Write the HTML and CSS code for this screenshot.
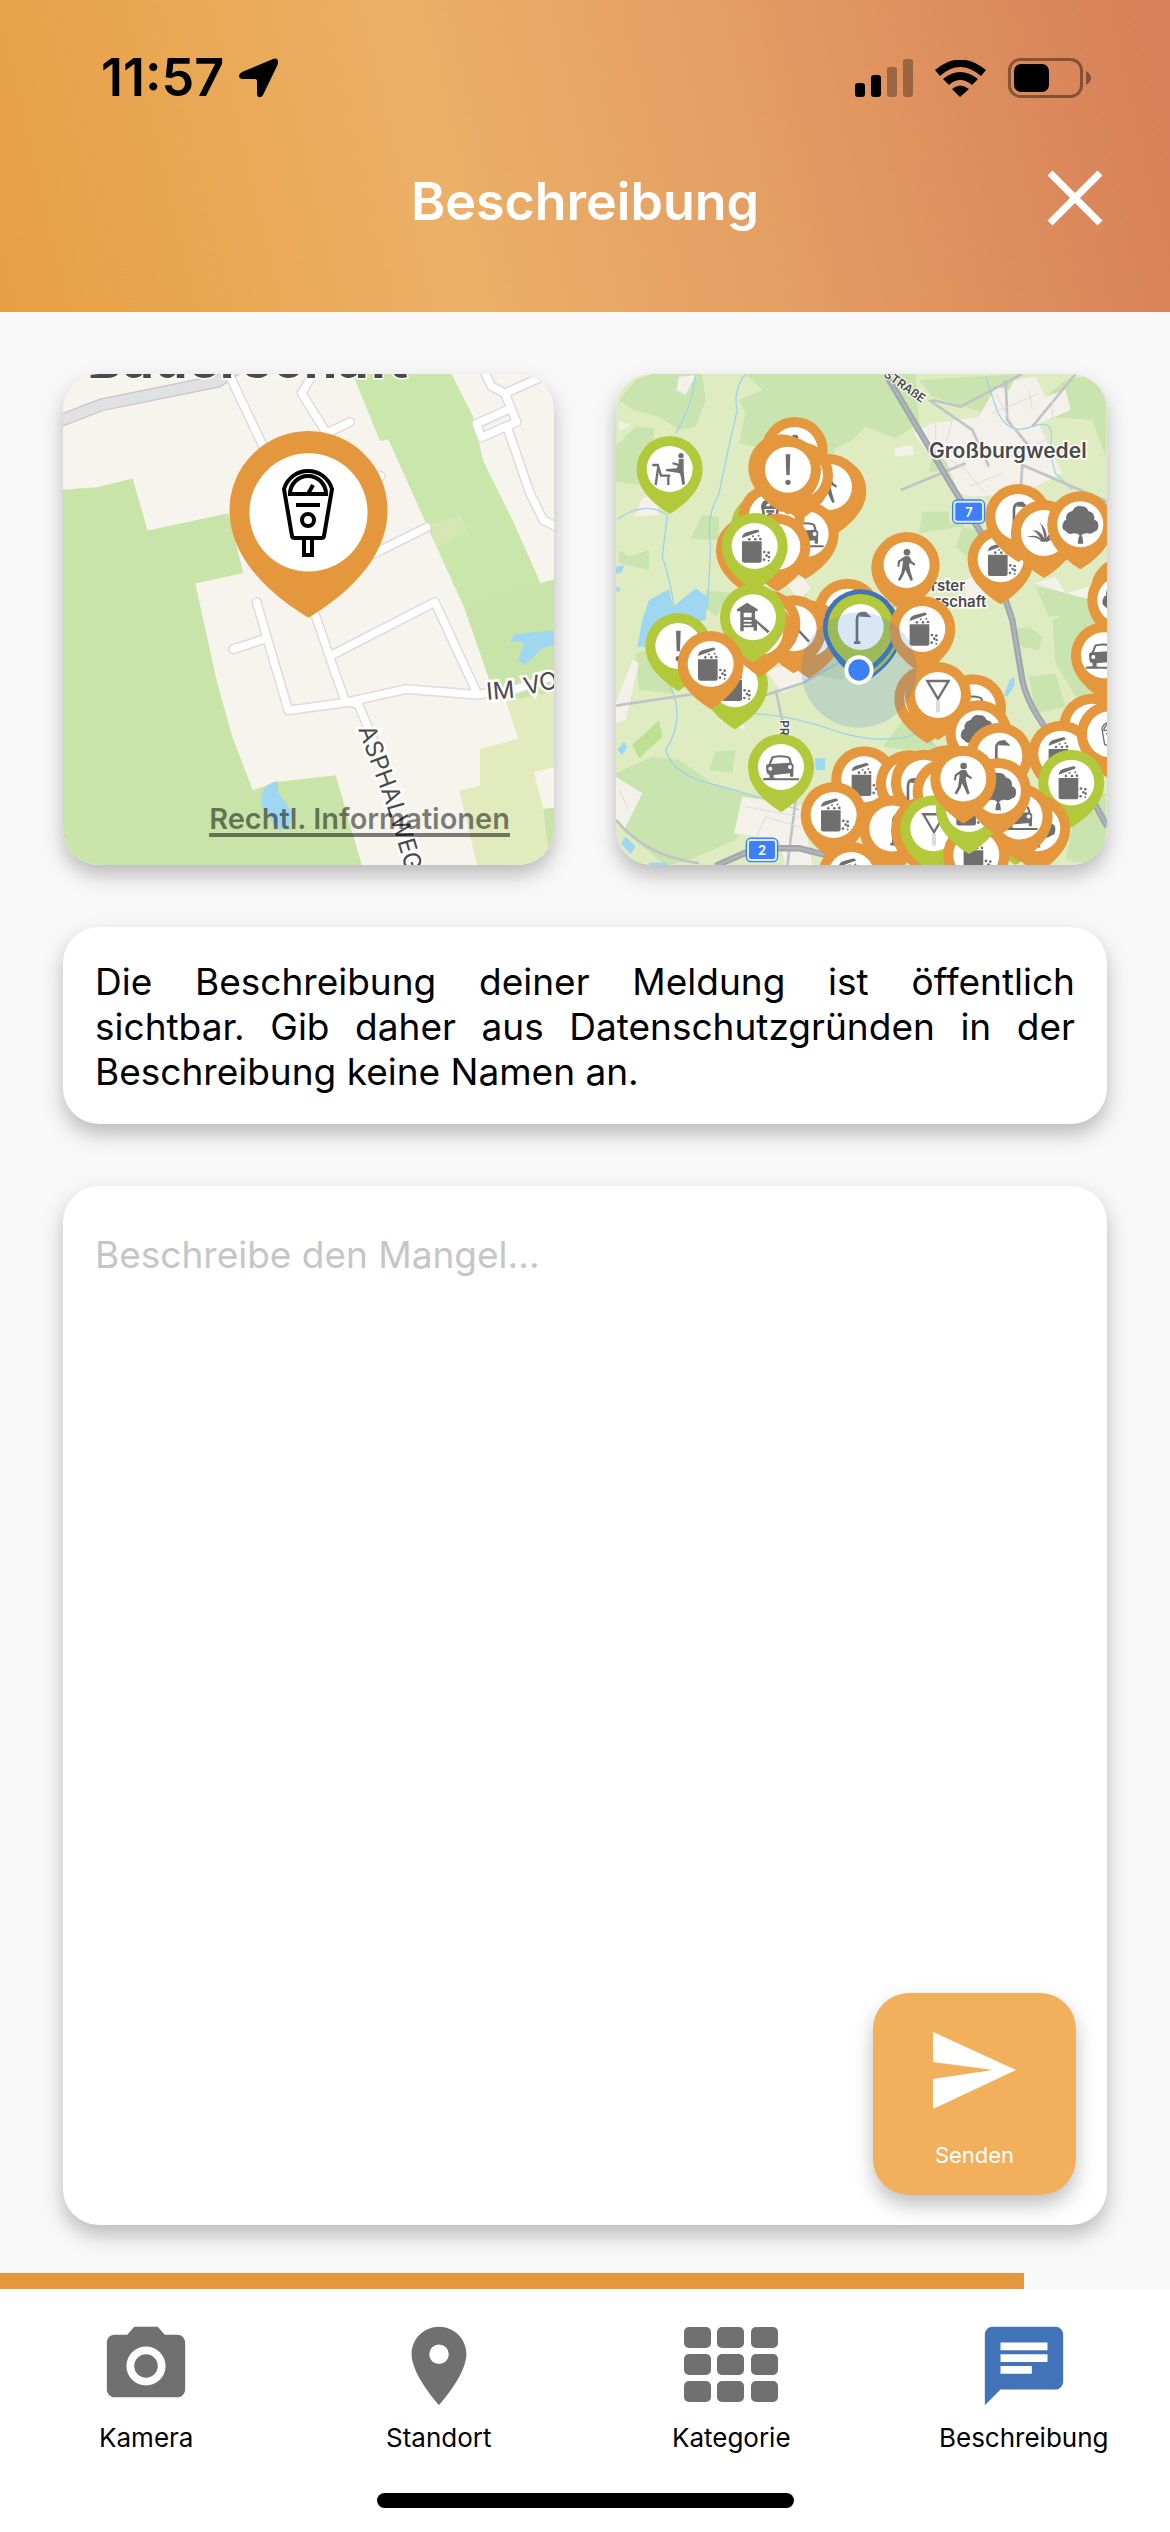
FILE: index.html
```html
<!DOCTYPE html>
<html lang="de">
<head>
<meta charset="utf-8">
<meta name="viewport" content="width=device-width, initial-scale=1">
<title>Beschreibung</title>
<link rel="stylesheet" href="styles.css">
</head>
<body>
<svg class="defs" aria-hidden="true">
  <defs>
    <g id="pin">
      <path d="M0 135C-38 112 -99 66 -99 0A99 99 0 0 1 99 0C99 66 38 112 0 135Z"/>
      <circle r="69" fill="#fff"/>
    </g>
    <g id="bin">
      <path d="M-38 -14H21V44Q21 50 15 50H-31Q-38 50 -38 43Z"/>
      <path d="M-38 -24C-37 -33 -33 -38 -25 -41L5 -49Q12 -50 14 -43L-38 -24Z"/>
      <g><circle cx="-16" cy="-20" r="4"/><circle cx="-5" cy="-29" r="3"/><circle cx="2" cy="-20" r="4"/><circle cx="12" cy="-31" r="3"/><circle cx="17" cy="-21" r="4"/><circle cx="29" cy="18" r="4"/><circle cx="42" cy="20" r="4"/><circle cx="36" cy="29" r="4"/><circle cx="28" cy="41" r="4"/><circle cx="43" cy="33" r="4"/><circle cx="42" cy="44" r="3"/></g>
    </g>
    <g id="man">
      <circle cx="1" cy="-38" r="10"/>
      <path d="M-6 -26H8L15 -12L26 -4L24 2L10 -6L7 0L11 18L19 45L12 48L1 24L-4 14L-8 28L-20 48L-26 44L-16 24L-12 -2L-11 -14L-20 -8L-22 6L-28 4L-26 -12Z"/>
    </g>
    <g id="car">
      <path d="M-45 -4Q-42 -8 -37 -9L-29 -29Q-27 -33 -22 -33Q0 -38 22 -32Q27 -31 29 -26L33 -11Q38 -9 38 -3L37 16V27Q33 33 27 27V19L-22 24V31Q-28 37 -34 31L-35 23Q-44 22 -44 10ZM-30 -9L26 -13L22 -26Q0 -32 -23 -27Z" fill-rule="evenodd"/>
      <circle cx="-32" cy="5" r="6" fill="#fff"/><circle cx="27" cy="0" r="6" fill="#fff"/>
      <path d="M-54 34Q-20 30 -16 34H54V40H-54Z"/>
    </g>
    <g id="lamp"><path d="M-13 44V-22Q-13 -43 8 -42H16M-22 47H-3M2 -35Q10 -44 20 -34Z" fill="none" stroke="#6f6f6f" stroke-width="8"/></g>
    <g id="tree">
      <path d="M-8 58L-4 34L-18 26Q-36 34 -44 20Q-58 14 -52 -2Q-50 -12 -42 -14Q-46 -34 -24 -40Q-14 -58 2 -54Q18 -56 24 -40Q44 -36 42 -14Q56 -10 54 6Q54 20 42 22Q32 32 18 26L6 34L9 58Z"/>
      <path d="M-12 28L-3 36M12 28L4 36" stroke="#fff" stroke-width="4"/>
    </g>
    <g id="bang"><path d="M-7 -46H7L5 16H-5Z"/><circle cy="38" r="8"/></g>
    <g id="yield"><path d="M-32 -42H32L0 12Z" fill="none" stroke="#6f6f6f" stroke-width="7"/><path d="M-6 16H6V52H-6Z" fill="#dcdcdc"/></g>
    <g id="grass"><path d="M-52 12Q-20 2 -8 20Q-26 -10 -40 -8Q-10 -12 2 18Q-4 -20 -14 -34Q10 -10 8 14Q20 -8 40 -10Q20 0 16 18Q30 10 44 14Q22 18 10 26H-8Q-16 10 -52 12Z"/></g>
    <g id="tower"><path d="M-48 -24L-18 -44L14 -24V-18H6V4L50 42L44 48L12 18V40H2V30H-28V42H-38V-18H-48ZM-28 -14V0H-4V-14ZM-28 8V13H-4V8ZM-28 19V24H-4V19Z" fill-rule="evenodd"/></g>
    <g id="bench">
      <circle cx="34" cy="-40" r="8"/>
      <path d="M27 -30H42V6L46 46L38 48L32 16L28 12L-12 6L-10 0L22 -2L24 -10L8 -14L9 -20L27 -16Z"/>
      <path d="M-52 -12H-36L-26 20H2M-34 -8L-42 48M-4 20V48" fill="none" stroke="#6f6f6f" stroke-width="7"/>
    </g>
    <g id="meter">
      <path d="M-16 35L-24 -12A25 25 0 0 1 24 -12L16 35Q16 37 13 37H-13Q-16 37 -16 35ZM-18 -7H18A18 18 0 0 0 -18 -7ZM0 -7L5 -16M-12 4H12M-4 37V54H4V37" fill="none" stroke="currentColor"/>
      <circle cy="19" r="6" fill="none" stroke="currentColor"/>
    </g>
  </defs>
</svg>

<header class="header">
  <div class="status">
    <div class="status-left">
      <span class="time">11:57</span>
      <svg width="39" height="40" viewBox="0 0 39 40" aria-hidden="true"><path d="M34 1Q39 -1 39 4Q39 6 38 8L24 37Q22 40 20 39Q18 39 18 35V23Q18 21 16 21H4Q0 21 0 18Q0 16 3 14Z"/></svg>
    </div>
    <div class="status-right">
      <svg width="58" height="38" viewBox="0 0 58 38" aria-hidden="true"><rect y="24" width="10" height="14" rx="3"/><rect x="16" y="16" width="10" height="22" rx="3"/><g opacity=".3"><rect x="32" y="8" width="10" height="30" rx="3"/><rect x="48" width="10" height="38" rx="3"/></g></svg>
      <svg width="51" height="37" viewBox="0 0 51 37" aria-hidden="true"><path d="M25 37L17 29Q25 22 34 29ZM8 19Q25 5 43 19L37 25Q25 15 14 25ZM0 10Q25 -11 51 10L46 16Q25 -2 5 16Z"/></svg>
      <svg width="83" height="40" viewBox="0 0 83 40" aria-hidden="true"><rect x="1.500" y="1.500" width="72" height="37" rx="11" fill="none" stroke="#000" stroke-width="3" opacity=".4"/><rect x="6" y="6" width="35" height="28" rx="7"/><path d="M78 13Q83 16 83 20T78 27Z" opacity=".4"/></svg>
    </div>
  </div>
  <div class="titlebar">
    <h1 class="title">Beschreibung</h1>
    <button class="close" type="button" aria-label="Schließen"><svg width="56" height="56" viewBox="0 0 56 56"><path d="M3 3L53 53M53 3L3 53" stroke="#fff" stroke-width="7"/></svg></button>
  </div>
</header>

<main class="main">
  <div class="maps">
    <div class="map">
      <svg viewBox="0 0 491 491" aria-hidden="true">
        <rect width="491" height="491" fill="#f7f4ed"/>
        <g transform="matrix(.3333 0 0 .338 -13 -14.5)">
          <path d="M39 385L140 378L248 352L293 506L535 455L580 632L436 663L500 950L545 1110L608 1274L680 1250L857 1230L940 1510H39Z" fill="#c9e4a9"/>
          <path d="M908 43H1205L1270 170L1300 300L1390 480L1472 662L1520 650V930L1320 950L1245 740L1160 555L1015 236L990 242Z" fill="#cae7ab"/>
          <path d="M1245 740Q1330 690 1472 662L1520 650V1000L1340 1010Z" fill="#c9e4a9"/>
          <path d="M1142 490L1232 462L1250 510L1160 555Z" fill="#d6e7b6"/>
          <path d="M1368 1012L1520 980V1510H1285L1228 1276L1290 1260V1152L1405 1122Z" fill="#e2ebbe"/>
          <path d="M1452 1220L1520 1205V1325L1480 1330Z" fill="#f7f4ed"/><path d="M1480 1330L1520 1325V1450H1495Z" fill="#c9e4a9"/>
          <path d="M1378 832L1395 812L1520 800V842L1475 855L1425 905L1405 890L1422 838Z" fill="#9fd7f1"/>
          <path d="M635 1320V1285Q650 1250 684 1248V1280L728 1340L715 1390H680Z" fill="#9fd7f1"/>
          <path d="M20 185L155 134L505 64L570 20" fill="none" stroke="#c4c6c8" stroke-width="38"/>
          <path d="M20 185L155 134L505 64L570 20" fill="none" stroke="#dfe1e3" stroke-width="31"/>
          <path class="road-edge" d="M540 50L660 300L790 740L885 1010L925 1020L985 1160M785 50L755 100L830 218L900 185M960 580L1130 497M985 345H992M620 718L715 1038L885 1015L1068 975L1280 992L1400 975L1530 930M550 857L650 825M845 875L1155 718L1280 985M1305 40L1325 80L1365 100L1490 45M1365 100L1400 185L1295 230L1280 190L1370 150M1375 210L1440 395L1480 475L1530 500"/>
          <path class="road-fill" d="M540 50L660 300L790 740L885 1010L925 1020L985 1160M785 50L755 100L830 218L900 185M960 580L1130 497M985 345H992M620 718L715 1038L885 1015L1068 975L1280 992L1400 975L1530 930M550 857L650 825M845 875L1155 718L1280 985M1305 40L1325 80L1365 100L1490 45M1365 100L1400 185L1295 230L1280 190L1370 150M1375 210L1440 395L1480 475L1530 500"/>
        </g>
        <g class="map-label">
          <text x="24" y="4" class="place-big">Bauerschaft</text>
          <text x="424" y="326" transform="rotate(-5 424 326)" class="street">IM</text>
          <text x="463" y="321" transform="rotate(-13 463 321)" class="street">VO</text>
          <path id="street-line" d="M295 355L323 430L344 500" fill="none" stroke="none"/>
          <text class="street"><textPath href="#street-line">ASPHALWEG</textPath></text>
        </g>
        <g transform="translate(245.500 136) scale(.798)" fill="#e4973c"><path d="M0 135C-38 112 -99 66 -99 0A99 99 0 0 1 99 0C99 66 38 112 0 135Z"/><circle cy="3" r="74" fill="#fff"/></g>
        <use href="#meter" x="245" y="127" stroke-width="4"/>
      </svg>
      <a class="legal" href="#">Rechtl. Informationen</a>
    </div>
    <div class="map">
      <svg viewBox="0 0 491 491" role="img" aria-label="Karte der Meldungen">
        <rect width="491" height="491" fill="#dfebc0"/>
        <g transform="translate(-17 -14) scale(.3333)">
          <g fill="#c9e4ae">
            <path d="M50 260L110 200L165 205L155 350L120 375L50 365ZM160 42H310L320 120L290 200L240 210L180 170L100 150L60 120L110 60ZM440 42H950L960 190L890 235L800 200L760 240L640 300L520 270L420 250L440 160L420 120L490 90Z"/>
            <path d="M60 570L90 590L150 570V630L60 610ZM310 465L360 470V540L275 535ZM560 200H720L700 300L600 290ZM970 455H1050V490H1095L1070 560L1140 620H1220L1190 520L1080 500L960 520Z"/>
            <path d="M1340 170L1480 180L1521 290V42L1400 60L1340 110ZM960 60L1260 42L1230 120L1160 160L1000 110ZM1000 290L1050 280L1060 330L990 335Z"/>
            <path d="M51 1240L160 1190L240 1200L340 1270L480 1310L410 1440L270 1500L200 1518L60 1400ZM350 1175L410 1170L400 1240L330 1230ZM320 690L400 700L350 770L320 740ZM110 880L210 850L220 1000L120 990Z"/>
            <path d="M1240 810L1290 800L1330 830L1320 870L1270 860ZM1360 780L1521 700V1020L1430 1010L1370 910ZM1290 950L1370 940L1400 1040L1310 1060ZM1310 680L1521 720L1480 760L1350 770ZM1440 1300H1521V1518L1400 1500ZM480 1390L560 1400L570 1460L490 1440ZM930 1060L1010 1100L1000 1180L850 1160ZM700 780L770 900L730 960L620 940Z"/>
          </g>
          <path d="M100 1155L180 1080L190 1130L120 1195Z" fill="#bfdf93"/>
          <g fill="#f3f1ea">
            <path d="M945 220L1000 190L1140 170L1190 80L1230 90L1245 60L1310 50L1340 110L1400 90L1415 150L1320 190L1350 260L1390 340L1270 400L1120 410L1080 400L1040 300L980 270ZM885 265L940 255L945 285L890 290Z"/>
            <path d="M240 50L290 45L260 105L232 90ZM60 185L95 195L60 215ZM130 415L170 400L180 465L105 470ZM560 670L610 650L635 685L600 720ZM50 1030L100 900L120 910L80 1080L50 1090ZM51 1250L130 1300L75 1410L51 1390ZM430 1310L610 1340L640 1518H560L540 1440L405 1420ZM360 1080L430 1075L440 1110ZM500 930L610 910L640 960L550 1000ZM1310 670L1370 650L1400 700L1470 680L1480 720L1400 700ZM1100 660L1140 640L1160 700L1100 720Z"/>
          </g>
          <g fill="#9dd7f2">
            <path d="M130 780L150 720L210 688L222 740L290 685L325 710L320 780L200 800L190 860L115 860ZM51 620L75 615L70 635L51 642ZM55 1170L75 1145L85 1160L70 1185ZM648 1195H678V1230H650ZM65 1450L80 1430L110 1460L95 1482ZM1232 960L1245 950L1248 975L1225 1010L1215 1005ZM150 1508H205V1520H150ZM50 680L65 685L55 700Z"/>
          </g>
          <path d="M290 42Q280 140 230 220M440 42Q400 90 415 150Q380 300 360 400Q320 470 335 560L325 750M55 478Q140 420 205 465L190 590Q220 680 225 750M215 980Q260 1080 200 1170Q220 1240 330 1270Q450 1300 600 1350M430 1060Q560 1060 700 1110T960 1120L1010 1160M1160 50L1190 140Q1220 230 1300 200T1350 270L1370 340L1420 390" fill="none" stroke="#9dd3ec" stroke-width="4"/>
          <g fill="none" stroke="#c0c4c6" stroke-width="8">
            <path d="M1270 42L1085 140L1000 120M990 120L1120 210L1170 320M1430 42L1300 200M1220 60L1225 180L1300 270M1260 470L1270 315L1525 425M905 390L1100 310M51 1037L300 1000M500 1005L610 970L750 890M530 990L550 1080M590 1320L565 1518M51 1380Q140 1490 300 1510M870 780L900 690"/>
          </g>
          <g fill="none" stroke="#dcdcd9" stroke-width="3"><path d="M1010 190V270L1100 330L1160 400M1060 180L1040 250M1190 100L1260 230M1320 100L1180 160M1360 120V180M1290 90L1300 150M1100 250L1210 300L1360 230M1110 380L1210 340M60 1290L90 1350M440 1340L600 1370M470 1440L500 1370L600 1400"/></g>
          <path d="M860 42L1060 380L1160 540L1240 780L1270 960Q1290 1060 1410 1190L1525 1400M350 1518L470 1465H600L700 1490" fill="none" stroke="#9ea5ac" stroke-width="19"/>
          <path d="M860 42L1060 380L1160 540L1240 780L1270 960Q1290 1060 1410 1190L1525 1400M350 1518L470 1465H600L700 1490" fill="none" stroke="#b0b5ba" stroke-width="7"/>
          <g fill="none" stroke="#3d7ff5" stroke-width="14"><rect x="1066" y="425" width="86" height="60" rx="9"/><rect x="447" y="1440" width="84" height="60" rx="9"/></g>
          <g fill="#3d7ff5" stroke="#d9ecff" stroke-width="6"><rect x="1066" y="425" width="86" height="60" rx="9"/><rect x="447" y="1440" width="84" height="60" rx="9"/></g>
        </g>
        <g class="map-label">
          <text x="313" y="84" class="place">Großburgwedel</text>
          <text x="315" y="217" class="place-small">rster</text>
          <text x="319" y="233" class="place-small">rschaft</text>
          <text x="267" y="2" transform="rotate(35 267 2)" class="street-small">STRAßE</text>
          <text x="164" y="346" transform="rotate(90 164 346)" class="street-small">PR</text>
          <text x="353" y="143" class="shield">7</text>
          <text x="146" y="481" class="shield">2</text>
        </g>
        <g transform="translate(-17 -14) scale(.3333)" fill="#e4973c">
          <g class="icon-ink">
            <g class="green"><use href="#pin" x="495" y="500"/></g>
            <g class="orange"><use href="#pin" x="587" y="270"/><use href="#pin" x="703" y="392"/><use href="#pin" x="690" y="381"/></g>
            <use href="#man" x="587" y="272"/><use href="#man" x="688" y="381"/>
            <use href="#pin" x="620" y="522" class="orange"/><use href="#car" x="620" y="522"/>
            <use href="#pin" x="518" y="470" class="orange"/><use href="#meter" x="514" y="450" stroke-width="8"/>
            <g class="orange"><use href="#pin" x="535" y="560"/><use href="#pin" x="450" y="570"/><use href="#pin" x="547" y="322"/><use href="#pin" x="603" y="345"/><use href="#pin" x="567" y="329"/></g>
            <use href="#bang" x="567" y="329"/>
            <use href="#pin" x="212" y="327" class="green"/><use href="#bench" x="212" y="327"/>
            <use href="#pin" x="467" y="558" class="green"/><use href="#bin" x="467" y="558"/>
            <use href="#pin" x="745" y="755" class="orange"/>
            <use href="#pin" x="238" y="858" class="green"/><use href="#bang" x="238" y="858"/>
            <use href="#pin" x="408" y="973" class="green"/><use href="#bin" x="408" y="973"/>
            <g class="orange"><use href="#pin" x="630" y="820"/><use href="#pin" x="584" y="805"/></g>
            <path d="M560 770L630 845M585 800V850" stroke="#6f6f6f" stroke-width="7"/>
            <g class="orange"><use href="#pin" x="505" y="790"/><use href="#pin" x="483" y="815"/></g>
            <use href="#pin" x="462" y="772" class="green"/><use href="#tower" x="462" y="772"/>
            <use href="#pin" x="335" y="912" class="orange"/><use href="#bin" x="335" y="912"/>
            <use href="#pin" class="blue" transform="translate(795 815) scale(1.14)"/>
            <use href="#pin" class="green" transform="translate(793 812) scale(1.09)"/>
            <use href="#pin" class="blue" transform="translate(785 801) scale(1.14)"/>
            <use href="#pin" x="785" y="801" class="green"/><use href="#lamp" x="787" y="801"/>
            <use href="#pin" x="546" y="1221" class="green"/><use href="#car" x="546" y="1221"/>
            <g class="orange"><use href="#pin" x="916" y="622"/><use href="#pin" x="923" y="615"/></g><use href="#man" x="923" y="615"/>
            <use href="#pin" x="970" y="807" class="orange"/><use href="#bin" x="970" y="807"/>
            <use href="#pin" x="985" y="1015" class="orange"/>
            <use href="#pin" x="1122" y="1042" class="orange"/><use href="#car" x="1122" y="1042"/>
            <use href="#pin" x="1017" y="1005" class="orange"/><use href="#yield" x="1017" y="1005"/>
            <use href="#pin" x="1205" y="598" class="orange"/><use href="#bin" x="1205" y="598"/>
            <use href="#pin" x="1258" y="471" class="orange"/><use href="#lamp" x="1258" y="471"/>
            <use href="#pin" x="1335" y="519" class="orange"/><use href="#grass" x="1335" y="519"/>
            <use href="#pin" x="1444" y="493" class="orange"/><use href="#tree" x="1444" y="493"/>
            <g class="orange"><use href="#pin" x="1575" y="690"/><use href="#pin" x="1564" y="720"/></g><use href="#tree" x="1564" y="720"/>
            <use href="#pin" x="1515" y="886" class="orange"/><use href="#car" x="1515" y="886"/>
            <use href="#pin" x="1480" y="1100" class="orange"/>
            <use href="#pin" x="1387" y="1181" class="orange"/><use href="#bin" x="1387" y="1181"/>
            <use href="#pin" x="1533" y="1123" class="orange"/><use href="#meter" x="1533" y="1118" stroke-width="4"/>
            <use href="#pin" x="1417" y="1268" class="green"/><use href="#bin" x="1417" y="1268"/>
            <use href="#pin" x="1139" y="1120" class="orange"/><use href="#tree" x="1139" y="1120"/>
            <use href="#pin" x="1201" y="1187" class="orange"/><use href="#lamp" x="1205" y="1187"/>
            <use href="#pin" x="796" y="1258" class="orange"/><use href="#bin" x="796" y="1258"/>
            <g class="orange"><use href="#pin" x="1043" y="1255"/><use href="#pin" x="930" y="1270"/><use href="#pin" x="975" y="1268"/></g><use href="#lamp" x="940" y="1300"/>
            <use href="#pin" x="704" y="1365" class="orange"/><use href="#bin" x="704" y="1365"/>
            <use href="#pin" x="880" y="1406" class="orange"/><use href="#lamp" x="896" y="1406"/>
            <g class="orange"><use href="#pin" x="1040" y="1295"/><use href="#pin" x="975" y="1410"/></g>
            <use href="#pin" x="757" y="1545" class="orange"/><use href="#bin" x="757" y="1545"/>
            <use href="#pin" x="1250" y="1380" class="green"/>
            <use href="#pin" x="1315" y="1405" class="orange"/><use href="#tree" x="1315" y="1405"/>
            <use href="#pin" x="1262" y="1370" class="orange"/><use href="#car" x="1262" y="1370"/>
            <use href="#pin" x="1003" y="1405" class="green"/><use href="#yield" x="1005" y="1405"/>
            <use href="#pin" x="1132" y="1485" class="orange"/><use href="#bin" x="1132" y="1485"/>
            <use href="#pin" x="1110" y="1347" class="green"/><use href="#bin" x="1110" y="1347"/>
            <use href="#pin" x="1197" y="1293" class="orange"/><use href="#tree" x="1197" y="1293"/>
            <use href="#pin" x="1093" y="1256" class="orange"/><use href="#man" x="1093" y="1256"/>
          </g>
          <circle cx="780" cy="930" r="173" fill="#4284d0" opacity=".2"/>
          <circle cx="780" cy="930" r="38" fill="#3d7ff5" stroke="#fff" stroke-width="12"/>
        </g>
      </svg>
    </div>
  </div>

  <p class="notice">Die Beschreibung deiner Meldung ist öffentlich sichtbar.&nbsp;Gib daher aus Datenschutzgründen in der Beschreibung keine Namen an.</p>

  <form class="editor">
    <textarea class="field" aria-label="Beschreibung des Mangels" placeholder="Beschreibe den Mangel..."></textarea>
    <button class="send" type="button">
      <svg width="83" height="77" viewBox="0 0 83 77" aria-hidden="true"><path d="M0 0L83 38L0 77V47L60 38L0 30Z" fill="#fff"/></svg>
      Senden
    </button>
  </form>
</main>

<div class="progress" role="progressbar" aria-label="Fortschritt" aria-valuenow="87"><div class="progress-bar"></div></div>

<footer class="footer">
  <nav class="tabs">
    <a class="tab" href="#"><svg viewBox="0 0 24 24" aria-hidden="true"><path fill-rule="evenodd" d="M9 2L7.200 4H4c-1.100 0-2 .9-2 2v12c0 1.100.9 2 2 2h16c1.100 0 2-.9 2-2V6c0-1.100-.9-2-2-2h-3.200L15 2zM12 17a5 5 0 1 1 0-10a5 5 0 0 1 0 10z"/><circle cx="12" cy="12" r="3"/></svg>Kamera</a>
    <a class="tab" href="#"><svg viewBox="0 0 24 24" aria-hidden="true"><path d="M12 2C8.130 2 5 5.130 5 9c0 5.250 7 13 7 13s7-7.750 7-13c0-3.870-3.130-7-7-7zm0 9.500a2.500 2.500 0 0 1 0-5 2.500 2.500 0 0 1 0 5z"/></svg>Standort</a>
    <a class="tab" href="#"><svg viewBox="0 0 94 94" aria-hidden="true"><g id="cells"><rect y="8" width="27" height="21" rx="5"/><rect x="33" y="8" width="27" height="21" rx="5"/><rect x="67" y="8" width="27" height="21" rx="5"/></g><use href="#cells" y="27"/><use href="#cells" y="54"/></svg>Kategorie</a>
    <a class="tab tab-active" href="#" aria-current="page"><svg viewBox="0 0 24 24" aria-hidden="true"><path fill-rule="evenodd" d="M20 2H4c-1.100 0-2 .9-2 2v18l4-4h14c1.100 0 2-.9 2-2V4c0-1.100-.9-2-2-2zM6 6h12v2H6zM6 9h12v2H6zM6 12h8v2H6z"/></svg>Beschreibung</a>
  </nav>
  <div class="home-indicator"></div>
</footer>
</body>
</html>
```
FILE: styles.css
```css
* { box-sizing: border-box; }

body {
  margin: 0;
  min-height: 100vh;
  display: flex;
  flex-direction: column;
  background: #f8f8f8;
  color: #000;
  font-family: Inter, "Liberation Sans", sans-serif;
}

button { border: 0; padding: 0; font: inherit; cursor: pointer; }
svg { display: block; }
.defs { position: absolute; width: 0; height: 0; }

.header {
  height: 312px;
  background: linear-gradient(77deg, #e79f45 0%, #e9a650 15%, #ebb068 38%, #e49c62 66%, #d78059 98%);
}

.status {
  display: flex;
  justify-content: space-between;
  align-items: center;
  height: 156px;
  padding: 0 79px 0 101px;
}
.status-left { display: flex; align-items: center; gap: 15px; }
.status-right { display: flex; align-items: center; gap: 22px; }
.time { font-size: 52px; line-height: 60px; font-weight: 600; }

.titlebar {
  display: grid;
  grid-template-columns: 1fr auto 1fr;
  align-items: center;
  height: 92px;
  padding: 0 67px;
}
.title {
  grid-column: 2;
  margin: 0;
  color: #fff;
  font-size: 52px;
  line-height: 64px;
  font-weight: 600;
}
.close { justify-self: end; padding-bottom: 8px; background: none; }

.main {
  flex: 1;
  display: flex;
  flex-direction: column;
  gap: 62px;
  padding: 62px 63px 48px;
}

.maps { display: grid; grid-template-columns: 1fr 1fr; gap: 62px; }

.map, .notice, .editor, .send {
  border-radius: 36px;
  box-shadow: 0 10px 20px rgba(0, 0, 0, .25);
}
.map { position: relative; overflow: hidden; }
.map svg { width: 100%; height: auto; }

.legal {
  position: absolute;
  right: 44px;
  bottom: 30px;
  color: rgba(0, 0, 0, .5);
  font-size: 29px;
  line-height: 32px;
  font-weight: 600;
  text-decoration-thickness: 4px;
  text-underline-offset: 4px;
}

.road-edge, .road-fill { fill: none; stroke-linecap: round; stroke-linejoin: round; }
.road-edge { stroke: #dcdcdc; stroke-width: 31px; }
.road-fill { stroke: #fff; stroke-width: 22px; }
.map-label { fill: #4a4a4a; stroke: #fff; stroke-width: 3px; paint-order: stroke; }
.place-big { font-size: 54px; font-weight: 700; }
.place { font-size: 21px; font-weight: 600; }
.place-small { font-size: 15px; font-weight: 600; }
.street { font-size: 24px; stroke-width: 5px; }
.street-small { font-size: 12px; font-weight: 600; stroke-width: 2px; }
.shield { font-size: 13px; font-weight: 600; text-anchor: middle; fill: #fff; stroke: none; }

.icon-ink { fill: #6f6f6f; color: #6f6f6f; }
.orange { fill: #e4973c; }
.green { fill: #b2c93c; }
.blue { fill: #4273b8; }

.notice {
  margin: 0;
  padding: 32px 32px 30px;
  background: #fff;
  font-size: 37px;
  line-height: 45px;
  text-align: justify;
}

.editor { position: relative; flex: 1; display: flex; background: #fff; }
.field {
  flex: 1;
  min-width: 0;
  padding: 46px 32px;
  border: 0;
  border-radius: 36px;
  background: none;
  resize: none;
  outline: 0;
  font: inherit;
  font-size: 37px;
  line-height: 45px;
}
.field::placeholder { color: #c6c6c8; opacity: 1; }

.send {
  position: absolute;
  right: 31px;
  bottom: 30px;
  display: flex;
  flex-direction: column;
  align-items: center;
  gap: 32px;
  width: 203px;
  height: 202px;
  padding-top: 39px;
  background: #f2b05d;
  color: #fff;
  font-size: 22px;
  line-height: 28px;
}

.progress { height: 16px; }
.progress-bar { width: 87.5%; height: 100%; background: #e4973c; }

.footer {
  display: flex;
  flex-direction: column;
  align-items: center;
  justify-content: space-between;
  height: 243px;
  padding: 30px 0 24px;
  background: #fff;
}
.tabs { display: grid; grid-template-columns: repeat(4, 1fr); width: 100%; }
.tab {
  display: flex;
  flex-direction: column;
  align-items: center;
  gap: 9px;
  color: #000;
  font-size: 26px;
  line-height: 32px;
  text-decoration: none;
}
.tab svg { width: 94px; height: 94px; fill: #707070; }
.tab-active svg { fill: #4273b8; }
.home-indicator { width: 417px; height: 15px; border-radius: 8px; background: #000; }
```
